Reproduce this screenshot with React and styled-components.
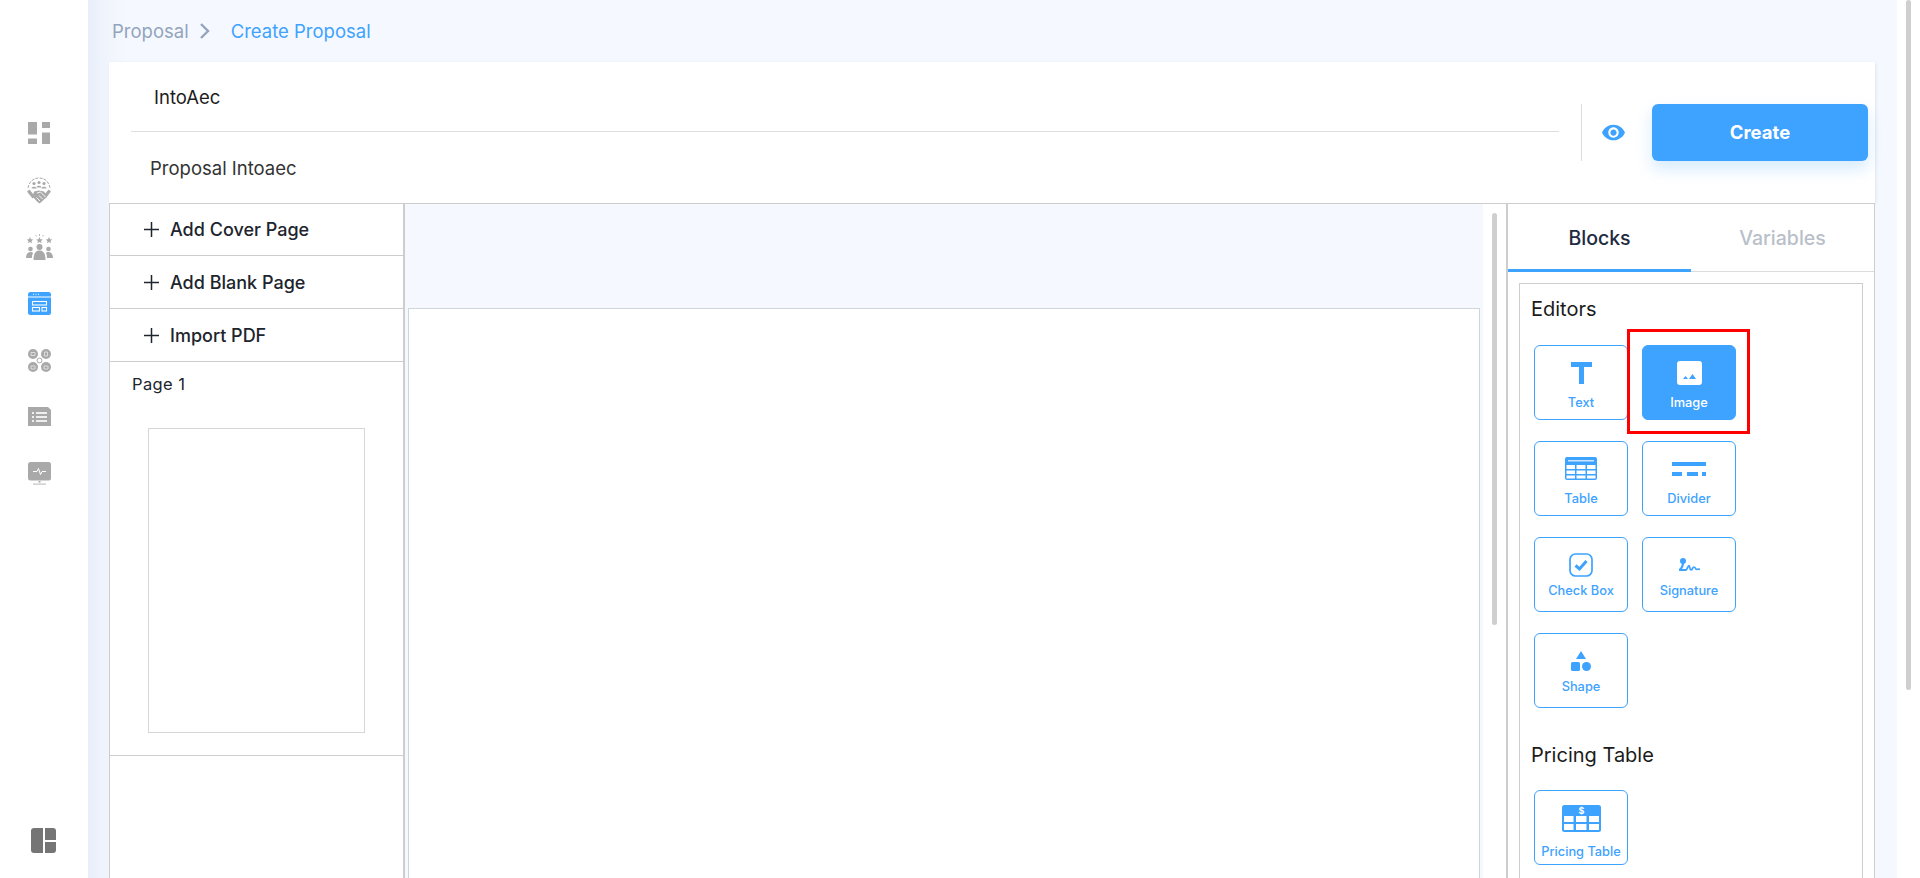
import React from 'react';
import styled, { createGlobalStyle } from 'styled-components';

const BLUE = '#3ea2ff';
const GREY = '#a9a9a9';

const GlobalStyle = createGlobalStyle`
  html, body { margin: 0; padding: 0; height: 100%; overflow: hidden; background: #fff; }
  body { font-family: Inter, "Open Sans", "Liberation Sans", sans-serif; }
  * { box-sizing: border-box; }
`;

const Page = styled.div`
  display: flex;
  width: 1920px;
  height: 878px;
  overflow: hidden;
  background: #fff;
`;

const Sidebar = styled.nav`
  width: 88px;
  flex: none;
  display: flex;
  flex-direction: column;
  align-items: stretch;
  padding-top: 105px;
  background: #fff;
`;

const NavItem = styled.div`
  height: 56.7px;
  display: flex;
  align-items: center;
  justify-content: center;
  padding-right: 10px;
`;

const NavFooter = styled.div`
  margin-top: auto;
  padding: 0 0 25px 31px;
  height: 50px;
`;

const Main = styled.main`
  width: 1809px;
  flex: none;
  padding: 0 22px 0 21px;
  display: flex;
  flex-direction: column;
  background: linear-gradient(90deg, #e9effa 0, #f0f5fd 20px, #f5f9ff 40px);
`;

const Breadcrumb = styled.div`
  height: 62px;
  flex: none;
  display: flex;
  align-items: center;
  padding-left: 3px;
  font-size: 18.5px;
`;

const CrumbLink = styled.span`
  color: ${p => (p.$active ? BLUE : '#93a4bd')};
`;

const CrumbIcon = styled.svg`
  width: 11px;
  height: 16px;
  margin: 0 21px 0 10px;
`;

const HeaderCard = styled.section`
  height: 141px;
  flex: none;
  display: flex;
  background: #fff;
  box-shadow: 1px 1px 3px rgba(120, 140, 170, 0.18);
`;

const TitleFields = styled.div`
  width: 1428px;
  margin-left: 22px;
  flex: none;
  display: flex;
  flex-direction: column;
`;

const TitleField = styled.div`
  height: ${p => (p.$first ? '70px' : '71px')};
  display: flex;
  align-items: center;
  padding-left: ${p => (p.$first ? '23px' : '19px')};
  font-size: 18.5px;
  color: ${p => (p.$first ? '#1c1c1c' : '#333')};
  border-bottom: ${p => (p.$first ? '1px solid #dedede' : 'none')};
`;

const HeaderActions = styled.div`
  flex: 1;
  display: flex;
  align-items: center;
  padding-left: 22px;
`;

const ActionDivider = styled.div`
  width: 1px;
  height: 57px;
  background: #dcdcdc;
  margin-right: 19px;
`;

const EyeIcon = styled.svg`
  width: 25px;
  height: 25px;
  fill: ${BLUE};
  margin-right: 26px;
  flex: none;
`;

const CreateButton = styled.button`
  width: 216px;
  height: 57px;
  padding: 0 0 2px;
  border: 0;
  border-radius: 6px;
  background: ${BLUE};
  color: #fff;
  font: 700 18.5px Inter, sans-serif;
  box-shadow: 0 8px 16px rgba(62, 162, 255, 0.22);
`;

const Workspace = styled.div`
  flex: 1;
  min-height: 0;
  display: flex;
  background: #fff;
  border-top: 1px solid #cdcdcd;
`;

const LeftPanel = styled.aside`
  width: 296px;
  flex: none;
  margin-top: -1px;
  display: flex;
  flex-direction: column;
  border-left: 1px solid #cdcdcd;
  border-right: 2px solid #cdcdcd;
`;

const AddRow = styled.div`
  height: 53px;
  flex: none;
  display: flex;
  align-items: center;
  padding-left: 34px;
  gap: 11px;
  border-bottom: 1px solid #cdcdcd;
  font-size: 18px;
  font-weight: 500;
  color: #20242c;
`;

const PageSlot = styled.div`
  height: 394px;
  flex: none;
  padding: 13px 0 0 22px;
  border-bottom: 1px solid #cdcdcd;
`;

const PageLabel = styled.div`
  font-size: 16.5px;
  letter-spacing: 0.4px;
  color: #20242c;
  line-height: 18px;
`;

const Thumb = styled.div`
  width: 217px;
  height: 305px;
  margin: 35px 0 0 16px;
  border: 1px solid #d6d6d6;
  background: #fff;
`;

const CanvasArea = styled.div`
  width: 1078px;
  flex: none;
  display: flex;
  flex-direction: column;
  padding: 0 3px;
  background: #f5f9ff;
`;

const CanvasTop = styled.div`
  height: 104px;
  flex: none;
`;

const CanvasSheet = styled.div`
  flex: 1;
  background: #fff;
  border: 1px solid #d0d5dc;
  border-bottom: 0;
`;

const Gutter = styled.div`
  width: 23px;
  flex: none;
  background: #fff;
  padding: 9px 0 0 9px;
`;

const ScrollThumb = styled.div`
  width: ${p => p.$w}px;
  height: ${p => p.$h}px;
  border-radius: 3px;
  background: #cfcfcf;
`;

const RightPanel = styled.aside`
  flex: 1;
  min-width: 0;
  display: flex;
  flex-direction: column;
  border-left: 2px solid #cdcdcd;
  border-right: 1px solid #cdcdcd;
`;

const Tabs = styled.div`
  height: 68px;
  flex: none;
  display: flex;
  border-bottom: 1px solid #dcdcdc;
`;

const Tab = styled.div`
  flex: 1;
  display: flex;
  align-items: center;
  justify-content: center;
  padding-top: 3px;
  font-size: 19.5px;
  font-weight: 500;
  color: ${p => (p.$active ? '#1e2a40' : '#b9bfc9')};
  border-bottom: 3px solid ${p => (p.$active ? BLUE : 'transparent')};
  margin-bottom: -1px;
`;

const BlocksBox = styled.div`
  position: relative;
  flex: 1;
  margin: 11px 11px 0 11px;
  border: 1px solid #cdcdcd;
  border-bottom: 0;
  padding: 11px 0 0 11px;
`;

const SectionTitle = styled.h3`
  margin: ${p => p.$top || 0}px 0 0;
  height: 28px;
  line-height: 28px;
  font-size: 20px;
  font-weight: 400;
  color: #1b1b1b;
`;

const BlockGrid = styled.div`
  display: grid;
  grid-template-columns: 94px 94px;
  grid-auto-rows: 75px;
  column-gap: 14px;
  row-gap: 21px;
  padding-left: 3px;
  margin-top: ${p => p.$top}px;
`;

const BlockButton = styled.div`
  display: flex;
  flex-direction: column;
  align-items: center;
  justify-content: flex-end;
  gap: ${p => p.$gap}px;
  padding-bottom: ${p => p.$bottom}px;
  border: 1px solid ${BLUE};
  border-radius: 6px;
  background: ${p => (p.$selected ? BLUE : '#fff')};
  color: ${p => (p.$selected ? '#fff' : BLUE)};
  font-size: 12.8px;
  font-weight: 500;
  line-height: 14px;
`;

const Highlight = styled.div`
  position: absolute;
  left: 107px;
  top: 45px;
  width: 123px;
  height: 105px;
  border: 3px solid #f00;
  pointer-events: none;
`;

const PageTrack = styled.div`
  flex: 1;
  background: #fff;
  padding: 0 0 0 9px;
`;

const Icon = styled.svg`
  display: block;
  flex: none;
`;

const LayoutIcon = () => (
  <Icon width="22" height="22" viewBox="0 0 22 22" fill={GREY}>
    <rect x="0" y="0" width="9" height="12.500" />
    <rect x="0" y="16.500" width="9" height="5.500" />
    <rect x="14" y="0" width="8" height="6" />
    <rect x="14" y="10.500" width="8" height="11.500" />
  </Icon>
);

const HandshakeIcon = () => (
  <Icon width="24" height="27" viewBox="0 0 24 27" fill={GREY}>
    <path d="M1 11C2 5 6 1 12 1s10 4 11 10" fill="none" stroke={GREY} strokeWidth="1" strokeDasharray="3 1.200" />
    <circle cx="7" cy="6.500" r="1.600" /><circle cx="12" cy="5.500" r="1.600" /><circle cx="17" cy="6.500" r="1.600" />
    <path d="M4.500 11.500c0-2.500 5-2.500 5 0zM9.500 10.500c0-2.500 5-2.500 5 0zM14.500 11.500c0-2.500 5-2.500 5 0z" />
    <path d="M0 14.500l2.500-2 5.500 7-2.500 2zM24 14.500l-2.500-2-5.500 7 2.500 2z" />
    <path d="M7 14.500l5-1 5 1 3.500 4.500-5 5-3 2.500-3-2.500-4-4.500z" />
    <path d="M10 16l3.500-1 5 5M9.500 20.500l3.500 3.500M12 18.500l3.500 3.500" fill="none" stroke="#fff" strokeWidth=".9" />
  </Icon>
);

const StarsTeamIcon = () => (
  <Icon width="27" height="26" viewBox="0 0 27 26" fill={GREY}>
    <path d="M13.500 0v2M9.500 1l1 1.500M17.500 1l-1 1.500" stroke={GREY} strokeWidth=".8" />
    <path d="M4 3l1 2.200 2.300.2-1.800 1.500.6 2.300L4 8l-2.100 1.200.6-2.300L.7 5.400 3 5.200z" />
    <path d="M13.500 3l1 2.200 2.300.2-1.800 1.500.6 2.300-2.100-1.200-2.100 1.200.6-2.300-1.800-1.500 2.300-.2z" />
    <path d="M23 3l1 2.200 2.300.2-1.800 1.500.6 2.300L23 8l-2.100 1.200.6-2.300-1.800-1.500 2.300-.2z" />
    <circle cx="13.500" cy="13" r="3" /><circle cx="4.500" cy="15" r="2.300" /><circle cx="22.500" cy="15" r="2.300" />
    <path d="M7.500 26c0-7 2.500-9.500 6-9.500s6 2.500 6 9.500z" />
    <path d="M0 24c0-4 2-6 4.500-6 1 0 2 .3 2.500 1-.8 1.500-1 3-1 5zM27 24c0-4-2-6-4.500-6-1 0-2 .3-2.500 1 .8 1.500 1 3 1 5z" />
  </Icon>
);

const TemplateIcon = () => (
  <Icon width="23" height="23" viewBox="0 0 23 23">
    <rect width="23" height="23" rx="2.500" fill={BLUE} />
    <rect x="0" y="4.500" width="23" height="1" fill="#fff" />
    <rect x="4.500" y="9.500" width="14" height="3.500" fill="none" stroke="#fff" strokeWidth="1.100" />
    <rect x="4.500" y="15.500" width="7" height="3.500" fill="none" stroke="#fff" strokeWidth="1.100" />
    <rect x="14" y="15.500" width="4.500" height="3.500" fill="none" stroke="#fff" strokeWidth="1.100" />
    <path d="M5 2.200h1M7.500 2.200h1M10 2.200h1" stroke="#fff" strokeWidth="1.100" />
  </Icon>
);

const ModulesIcon = () => (
  <Icon width="23" height="23" viewBox="0 0 23 23" fill={GREY}>
    <circle cx="5" cy="5" r="5" /><circle cx="18" cy="5" r="5" />
    <circle cx="5" cy="18" r="5" /><circle cx="18" cy="18" r="5" />
    <circle cx="11.500" cy="11.500" r="2.400" fill="#fff" stroke={GREY} strokeWidth="1" />
    <path d="M3 3.500h4v3H3zM16.500 3h3v4h-3zM3 17h4v3H3zM16 17h4v3h-4z" fill="none" stroke="#e8e8e8" strokeWidth=".8" />
  </Icon>
);

const ListDocIcon = () => (
  <Icon width="23" height="19" viewBox="0 0 23 19" fill={GREY}>
    <path d="M0 0h20l3 3v16H0z" />
    <path d="M4 5h2v2H4zM4 9h2v2H4zM4 13h2v2H4z" fill="#eee" />
    <path d="M8 5h11v2H8zM8 9h11v2H8zM8 13h11v2H8z" fill="#eee" />
  </Icon>
);

const MonitorIcon = () => (
  <Icon width="23" height="23" viewBox="0 0 23 23" fill={GREY}>
    <rect width="23" height="18.500" rx="2.500" />
    <path d="M5 9.500h4l1.500-3 2 6 1.500-3h4" fill="none" stroke="#fff" strokeWidth="1" />
    <rect x="10.500" y="19" width="2" height="1.500" />
    <rect x="5" y="21.500" width="13" height="1.200" opacity=".7" />
  </Icon>
);

const BoardIcon = () => (
  <Icon width="25" height="25" viewBox="0 0 25 25" fill="#757575">
    <path d="M3 0h9v25H3a3 3 0 0 1-3-3V3a3 3 0 0 1 3-3z" />
    <path d="M14 0h8a3 3 0 0 1 3 3v9H14z" />
    <path d="M14 14h11v8a3 3 0 0 1-3 3h-8z" />
  </Icon>
);

const TextIcon = () => (
  <Icon width="21" height="22" viewBox="0 0 21 22" fill={BLUE}>
    <path d="M0 0h21v5h-8v17H8V5H0z" />
  </Icon>
);

const ImageIcon = () => (
  <Icon width="25" height="24" viewBox="0 0 25 24">
    <rect width="25" height="24" rx="3" fill="#fff" />
    <path d="M6 18l2.500-3 2.500 3zM12 18l3.500-5 3.500 5z" fill={BLUE} />
  </Icon>
);

const TableIcon = () => (
  <Icon width="32" height="23" viewBox="0 0 32 23">
    <rect width="32" height="23" rx="2" fill={BLUE} />
    <rect x="3" y="3" width="26" height="1.500" fill="#cfe6ff" />
    <g fill="#fff">
      <rect x="1.500" y="8" width="8.500" height="4" /><rect x="11.500" y="8" width="9" height="4" /><rect x="22" y="8" width="8.500" height="4" />
      <rect x="1.500" y="13.500" width="8.500" height="3.500" /><rect x="11.500" y="13.500" width="9" height="3.500" /><rect x="22" y="13.500" width="8.500" height="3.500" />
      <rect x="1.500" y="18.500" width="8.500" height="3" /><rect x="11.500" y="18.500" width="9" height="3" /><rect x="22" y="18.500" width="8.500" height="3" />
    </g>
  </Icon>
);

const DividerIcon = () => (
  <Icon width="34" height="14" viewBox="0 0 34 14" fill={BLUE}>
    <rect width="34" height="4" />
    <rect y="10" width="10" height="4" />
    <rect x="15" y="10" width="11" height="4" />
    <rect x="30" y="10" width="4" height="4" />
  </Icon>
);

const CheckIcon = () => (
  <Icon width="24" height="24" viewBox="0 0 24 24" fill="none">
    <rect x="1" y="1" width="22" height="22" rx="5.500" stroke={BLUE} strokeWidth="1.700" />
    <path d="M6.500 12.500l4 3.500 7-8" stroke={BLUE} strokeWidth="3" />
  </Icon>
);

const SignatureIcon = () => (
  <Icon width="21" height="13" viewBox="0 0 21 13" fill="none" stroke={BLUE}>
    <circle cx="4" cy="3" r="3" fill={BLUE} stroke="none" />
    <path d="M4 4c0 3-.5 6-3.500 8h7" strokeWidth="2.200" />
    <path d="M7 12c1.500-1 2-4.500 3-4.500s.5 4.500 2 4.500 1.500-3 3-3 1.500 2.500 2.500 2.500S19 10.500 21 11.500" strokeWidth="1.700" />
  </Icon>
);

const ShapeIcon = () => (
  <Icon width="20" height="20" viewBox="0 0 20 20" fill={BLUE}>
    <path d="M10 0l5 8H5z" />
    <rect y="11" width="9" height="9" rx="1.500" />
    <circle cx="15.500" cy="15.500" r="4.500" />
  </Icon>
);

const PricingIcon = () => (
  <Icon width="39" height="27" viewBox="0 0 39 27">
    <rect width="39" height="27" rx="2.500" fill={BLUE} />
    <g fill="#fff">
      <rect x="2" y="11" width="9.500" height="6" /><rect x="14" y="11" width="10.500" height="6" /><rect x="27" y="11" width="10" height="6" />
      <rect x="2" y="19" width="9.500" height="6" /><rect x="14" y="19" width="10.500" height="6" /><rect x="27" y="19" width="10" height="6" />
    </g>
    <text x="19.500" y="8.500" textAnchor="middle" fill="#fff" fontSize="9" fontWeight="700" fontFamily="Inter, sans-serif">$</text>
  </Icon>
);

const navIcons = [
  <LayoutIcon key="layout" />,
  <HandshakeIcon key="hand" />,
  <StarsTeamIcon key="stars" />,
  <TemplateIcon key="template" />,
  <ModulesIcon key="modules" />,
  <ListDocIcon key="list" />,
  <MonitorIcon key="monitor" />,
];

const addRows = ['Add Cover Page', 'Add Blank Page', 'Import PDF'];

const editorBlocks = [
  { label: 'Text', icon: <TextIcon />, gap: 12, bottom: 9 },
  { label: 'Image', icon: <ImageIcon />, gap: 11, bottom: 9, selected: true },
  { label: 'Table', icon: <TableIcon />, gap: 12, bottom: 9 },
  { label: 'Divider', icon: <DividerIcon />, gap: 16, bottom: 9 },
  { label: 'Check Box', icon: <CheckIcon />, gap: 7, bottom: 13 },
  { label: 'Signature', icon: <SignatureIcon />, gap: 13, bottom: 13 },
  { label: 'Shape', icon: <ShapeIcon />, gap: 9, bottom: 13 },
];

export default function App() {
  return (
    <>
      <GlobalStyle />
      <Page>
        <Sidebar>
          {navIcons.map(icon => (
            <NavItem key={icon.key}>{icon}</NavItem>
          ))}
          <NavFooter>
            <BoardIcon />
          </NavFooter>
        </Sidebar>
        <Main>
          <Breadcrumb>
            <CrumbLink>Proposal</CrumbLink>
            <CrumbIcon viewBox="0 0 11 16" fill="none" stroke="#93a4bd" strokeWidth="2.400">
              <path d="M2 1l7 7-7 7" />
            </CrumbIcon>
            <CrumbLink $active>Create Proposal</CrumbLink>
          </Breadcrumb>
          <HeaderCard>
            <TitleFields>
              <TitleField $first>IntoAec</TitleField>
              <TitleField>Proposal Intoaec</TitleField>
            </TitleFields>
            <HeaderActions>
              <ActionDivider />
              <EyeIcon viewBox="0 0 24 24">
                <path d="M12 4.500C7 4.500 2.730 7.610 1 12c1.730 4.390 6 7.500 11 7.500s9.270-3.110 11-7.500c-1.730-4.390-6-7.500-11-7.500zM12 17c-2.760 0-5-2.240-5-5s2.240-5 5-5 5 2.240 5 5-2.240 5-5 5zm0-8c-1.660 0-3 1.340-3 3s1.340 3 3 3 3-1.340 3-3-1.340-3-3-3z" />
              </EyeIcon>
              <CreateButton>Create</CreateButton>
            </HeaderActions>
          </HeaderCard>
          <Workspace>
            <LeftPanel>
              {addRows.map(label => (
                <AddRow key={label}>
                  <svg width="15" height="15" viewBox="0 0 15 15" stroke="#20242c" strokeWidth="1.500">
                    <path d="M7.500 0v15M0 7.500h15" />
                  </svg>
                  {label}
                </AddRow>
              ))}
              <PageSlot>
                <PageLabel>Page 1</PageLabel>
                <Thumb />
              </PageSlot>
            </LeftPanel>
            <CanvasArea>
              <CanvasTop />
              <CanvasSheet />
            </CanvasArea>
            <Gutter>
              <ScrollThumb $w={5} $h={412} />
            </Gutter>
            <RightPanel>
              <Tabs>
                <Tab $active>Blocks</Tab>
                <Tab>Variables</Tab>
              </Tabs>
              <BlocksBox>
                <SectionTitle>Editors</SectionTitle>
                <BlockGrid $top={22}>
                  {editorBlocks.map(b => (
                    <BlockButton key={b.label} $gap={b.gap} $bottom={b.bottom} $selected={b.selected}>
                      {b.icon}
                      {b.label}
                    </BlockButton>
                  ))}
                </BlockGrid>
                <SectionTitle $top={33}>Pricing Table</SectionTitle>
                <BlockGrid $top={21}>
                  <BlockButton $gap={13} $bottom={5}>
                    <PricingIcon />
                    Pricing Table
                  </BlockButton>
                </BlockGrid>
                <Highlight />
              </BlocksBox>
            </RightPanel>
          </Workspace>
        </Main>
        <PageTrack>
          <ScrollThumb $w={5} $h={690} />
        </PageTrack>
      </Page>
    </>
  );
}
